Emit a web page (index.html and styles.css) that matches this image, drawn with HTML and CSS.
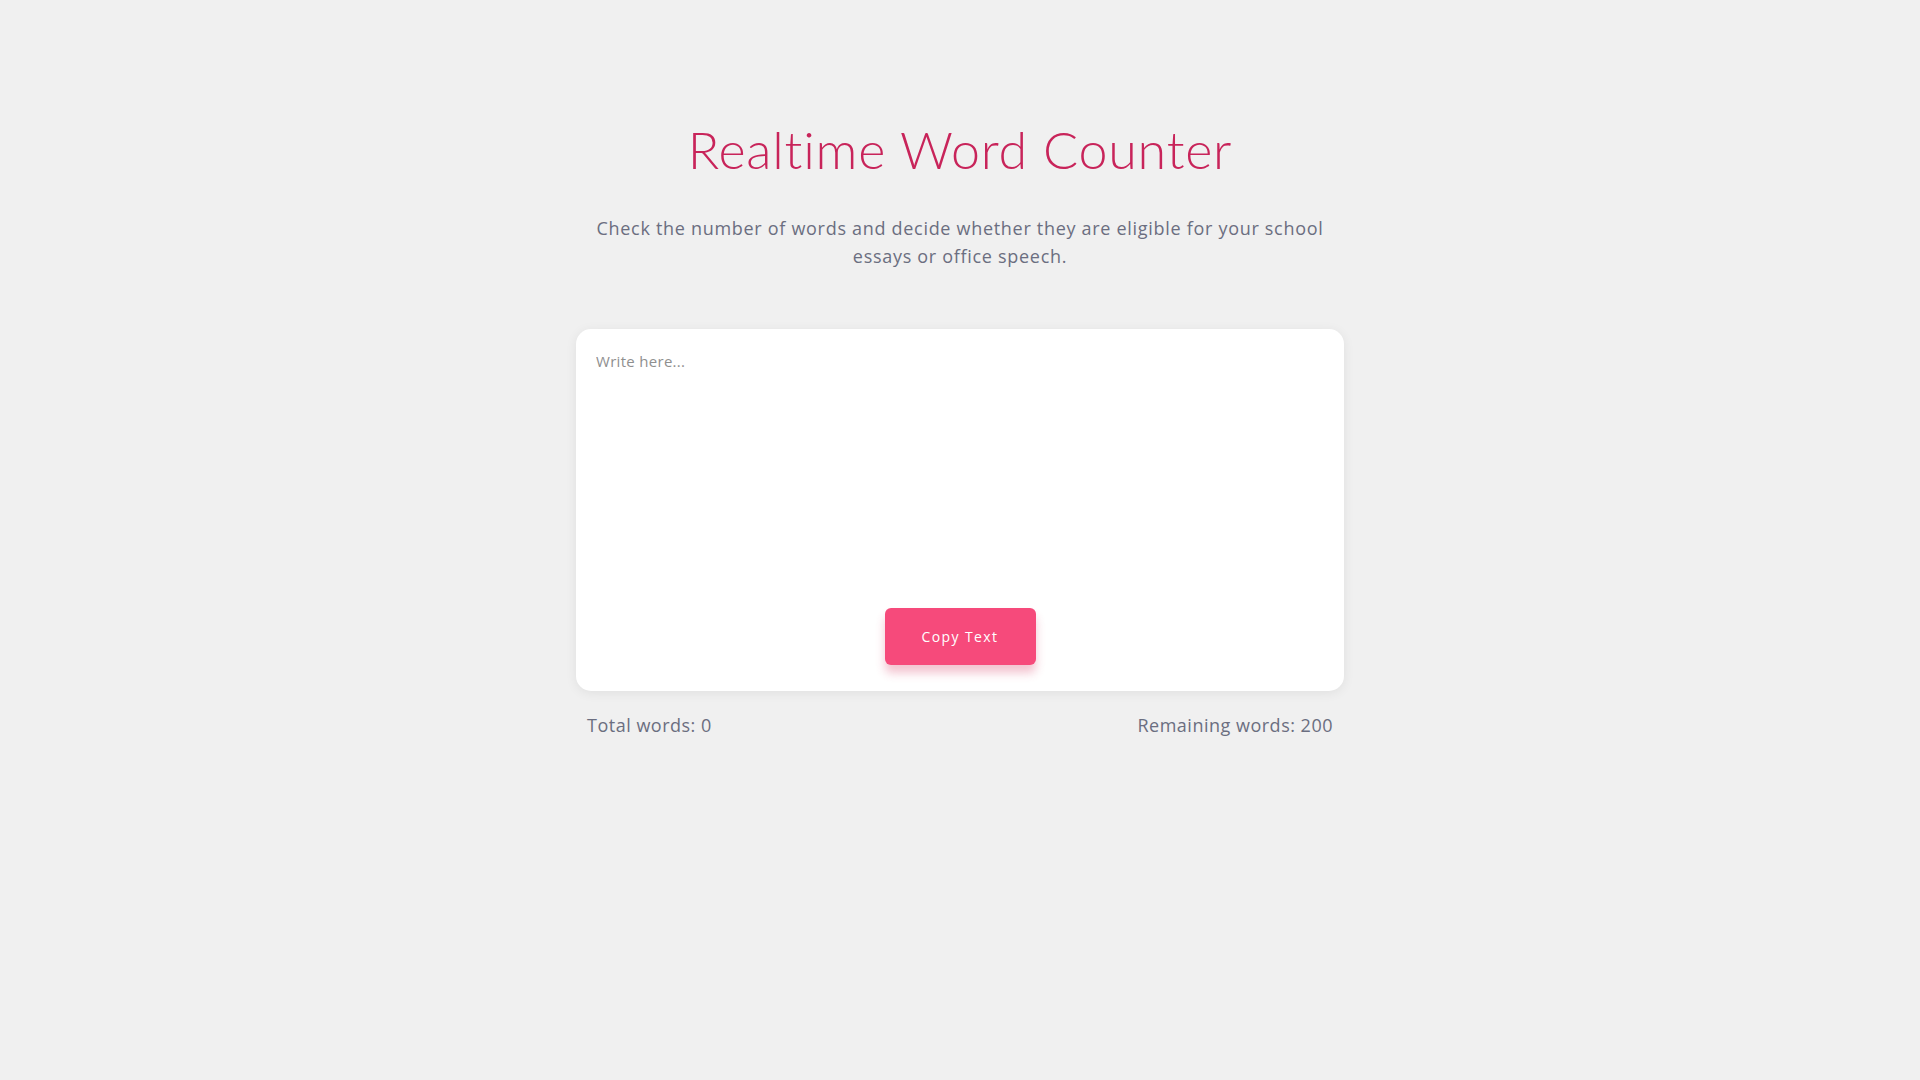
FILE: index.html
```html
<!DOCTYPE html>
<html lang="en">
<head>
<meta charset="utf-8">
<title>Realtime Word Counter</title>
<link rel="stylesheet" href="styles.css">
</head>
<body>
<main class="wrap">
  <h1 class="title">Realtime Word Counter</h1>
  <p class="subtitle">Check the number of words and decide whether they are eligible for your school essays or office speech.</p>
  <div class="card">
    <textarea class="editor" placeholder="Write here..."></textarea>
    <button class="copy-btn" type="button">Copy Text</button>
  </div>
  <div class="stats">
    <span class="stat">Total words: 0</span>
    <span class="stat">Remaining words: 200</span>
  </div>
</main>
</body>
</html>
```
FILE: styles.css
```css
html, body {
  margin: 0;
  padding: 0;
}
body {
  background: #f0f0f0;
  font-family: "Open Sans", "Liberation Sans", sans-serif;
}
.wrap {
  width: 768px;
  margin: 0 auto;
  padding-top: 116px;
  display: flex;
  flex-direction: column;
  align-items: center;
}
.title {
  margin: 0;
  font-family: "Lato", "Liberation Sans", sans-serif;
  font-weight: 300;
  font-size: 52px;
  line-height: 66px;
  color: #c8245a;
  letter-spacing: 0.8px;
}
.subtitle {
  margin: 32px 0 0;
  max-width: 750px;
  text-align: center;
  font-size: 18px;
  line-height: 28px;
  letter-spacing: 0.7px;
  color: #6b6e80;
}
.card {
  margin-top: 59px;
  width: 768px;
  height: 362px;
  box-sizing: border-box;
  background: #fff;
  border-radius: 15px;
  box-shadow: 0 2px 12px rgba(0, 0, 0, 0.07);
  display: flex;
  flex-direction: column;
  align-items: center;
  padding: 21px 20px 26px;
}
.editor {
  flex: 1;
  width: 100%;
  border: none;
  outline: none;
  resize: none;
  padding: 0;
  font-family: "Open Sans", "Liberation Sans", sans-serif;
  font-size: 15px;
  line-height: 22px;
  letter-spacing: 0.3px;
  color: #333;
  background: transparent;
}
.editor::placeholder {
  color: #8f8f8f;
}
.copy-btn {
  width: 151px;
  height: 57px;
  border: none;
  border-radius: 6px;
  background: #f64a7b;
  color: #fff;
  font-family: "Open Sans", "Liberation Sans", sans-serif;
  font-size: 14px;
  letter-spacing: 1.4px;
  box-shadow: 0 8px 10px rgba(214, 60, 100, 0.3);
  cursor: pointer;
}
.stats {
  width: 100%;
  box-sizing: border-box;
  padding: 0 11px;
  margin-top: 20px;
  display: flex;
  justify-content: space-between;
}
.stat {
  font-size: 18px;
  line-height: 28px;
  letter-spacing: 0.5px;
  color: #6b6e80;
}
```
